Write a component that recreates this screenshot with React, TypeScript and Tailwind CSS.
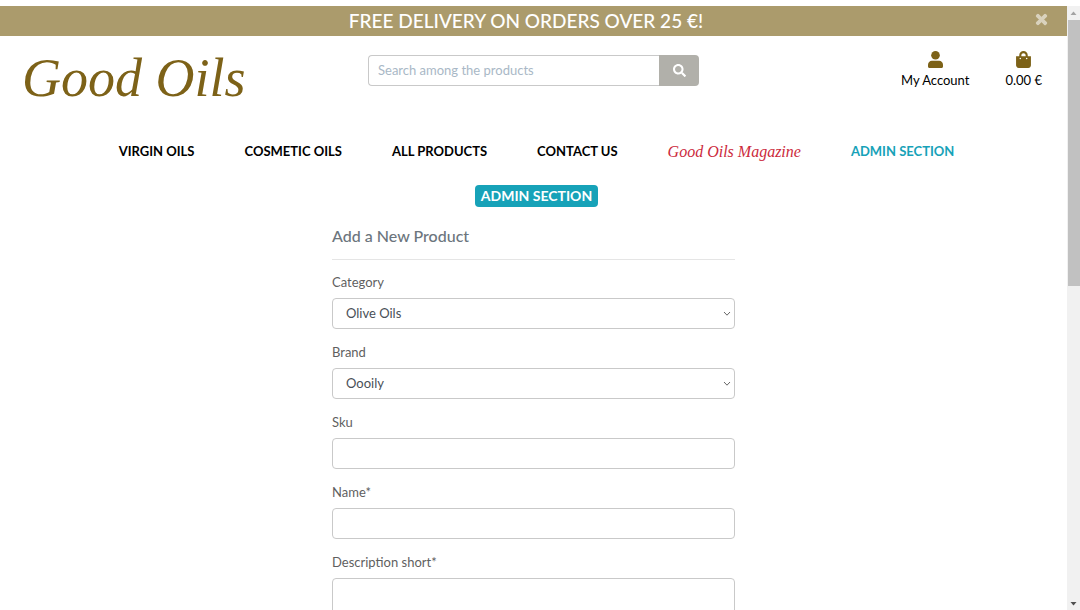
import { FaSearch, FaShoppingBag, FaTimes } from "react-icons/fa";

const links = ["VIRGIN OILS", "COSMETIC OILS", "ALL PRODUCTS", "CONTACT US"];

const control =
  "block h-[31px] w-full rounded border border-[#c9c9c9] bg-white text-[13px] text-[#495057]";

function SelectField({ id, label, options }: { id: string; label: string; options: string[] }) {
  return (
    <div className="mb-[15px]">
      <label htmlFor={id} className="mb-2 block text-[13px] leading-4 text-[#5f5f5f]">
        {label}
      </label>
      <div className="grid items-center">
        <select id={id} className={`${control} col-start-1 row-start-1 appearance-none pl-[13px] pr-6`}>
          {options.map((option) => (
            <option key={option}>{option}</option>
          ))}
        </select>
        <svg
          viewBox="0 0 8 6"
          className="pointer-events-none col-start-1 row-start-1 mr-1 h-[6px] w-2 justify-self-end"
          fill="none"
          stroke="#666"
          aria-hidden="true"
        >
          <path d="M1 1l3 3.2L7 1" />
        </svg>
      </div>
    </div>
  );
}

function TextField({ id, label, multiline = false }: { id: string; label: string; multiline?: boolean }) {
  return (
    <div className="mb-[15px]">
      <label htmlFor={id} className="mb-2 block text-[13px] leading-4 text-[#5f5f5f]">
        {label}
      </label>
      {multiline ? (
        <textarea
          id={id}
          rows={6}
          className="block w-full resize-none rounded border border-[#c9c9c9] bg-white px-3 py-1 text-[13px]"
        />
      ) : (
        <input id={id} type="text" className={`${control} px-3`} />
      )}
    </div>
  );
}

function UserIcon() {
  return (
    <svg viewBox="0 0 15 17" className="h-[17px] w-[15px] text-[#7d6218]" fill="currentColor" aria-hidden="true">
      <circle cx="7.5" cy="4.3" r="4.3" />
      <path d="M4 9.8h7c2.4 0 4 1.7 4 4v1.7c0 .9-.6 1.5-1.5 1.5h-12C.6 17 0 16.400 0 15.500v-1.700c0-2.300 1.600-4 4-4z" />
    </svg>
  );
}

function ScrollBar() {
  return (
    <div className="mt-[6px] flex w-[13px] shrink-0 flex-col items-center bg-[#f1f1f1]" aria-hidden="true">
      <svg viewBox="0 0 13 14" className="h-[14px] w-[13px]">
        <path d="M3.5 9h6l-3-3.500z" fill="#a3a3a3" />
      </svg>
      <div className="h-[266px] w-3 self-end bg-[#c1c1c1]" />
      <svg viewBox="0 0 13 14" className="mt-auto h-[14px] w-[13px]">
        <path d="M3.5 6h6l-3 3.500z" fill="#505050" />
      </svg>
    </div>
  );
}

export default function App() {
  return (
    <div className="flex h-screen overflow-hidden bg-white font-['Lato',sans-serif] text-[13px] text-black">
      <div className="min-w-0 flex-1 overflow-hidden pt-[6px]">
        <div className="flex h-[30px] items-center bg-[#ab9b6c] px-[18px]">
          <p className="flex-1 text-center text-[19px] leading-[30px] font-medium text-white">
            FREE DELIVERY ON ORDERS OVER 25 €!
          </p>
          <button type="button" aria-label="Close" className="mb-1 text-[#d9d2bd]">
            <FaTimes size={15} className="stroke-current" strokeWidth={36} />
          </button>
        </div>

        <header className="flex h-[92px] items-start justify-between pr-[25px] pl-[22px]">
          <a
            href="#home"
            className="w-[346px] pt-[6px] font-['Liberation_Serif',serif] text-[54px] leading-[72px] text-[#7d6218] italic"
          >
            Good Oils
          </a>
          <form className="mt-[19px] flex h-[31px] w-[331px]" role="search">
            <input
              type="search"
              aria-label="Search among the products"
              placeholder="Search among the products"
              className="min-w-0 flex-1 rounded-l border border-r-0 border-[#c9c9c9] px-[9px] text-[13px] placeholder:text-[#a9b8c6]"
            />
            <button
              type="button"
              aria-label="Search"
              className="flex w-10 items-center justify-center rounded-r bg-[#b1b0aa] text-white"
            >
              <FaSearch size={13} />
            </button>
          </form>
          <div className="ml-auto flex gap-9 pt-[15px] leading-5">
            <a href="#account" className="flex flex-col items-center gap-[2px]">
              <UserIcon />
              My Account
            </a>
            <a href="#bag" className="flex flex-col items-center gap-[2px]">
              <FaShoppingBag size={17} className="text-[#7d6218]" />
              0.00 €
            </a>
          </div>
        </header>

        <nav className="mt-1 flex h-10 items-center justify-center gap-[50px] pl-[6px] text-[13px] font-bold">
          {links.map((link) => (
            <a key={link} href="#products">
              {link}
            </a>
          ))}
          <a
            href="#magazine"
            className="font-['Liberation_Serif',serif] text-base font-normal text-[#cc2a3c] italic"
          >
            Good Oils Magazine
          </a>
          <a href="#admin" className="text-[#17a2b8]">
            ADMIN SECTION
          </a>
        </nav>

        <main>
          <div className="mt-[13px] flex justify-center pl-[6px]">
            <h1 className="rounded bg-[#17a2b8] px-[6px] text-[14px] leading-[22px] font-bold text-white">
              ADMIN SECTION
            </h1>
          </div>
          <form className="mx-auto mt-[17px] w-full max-w-[403px]">
            <h2 className="mb-[14px] border-b border-[#e5e5e5] pb-[11px] text-base leading-6 font-medium text-[#6c757d]">
              Add a New Product
            </h2>
            <SelectField id="category" label="Category" options={["Olive Oils"]} />
            <SelectField id="brand" label="Brand" options={["Oooily"]} />
            <TextField id="sku" label="Sku" />
            <TextField id="name" label="Name*" />
            <TextField id="description" label="Description short*" multiline />
          </form>
        </main>
      </div>
      <ScrollBar />
    </div>
  );
}
